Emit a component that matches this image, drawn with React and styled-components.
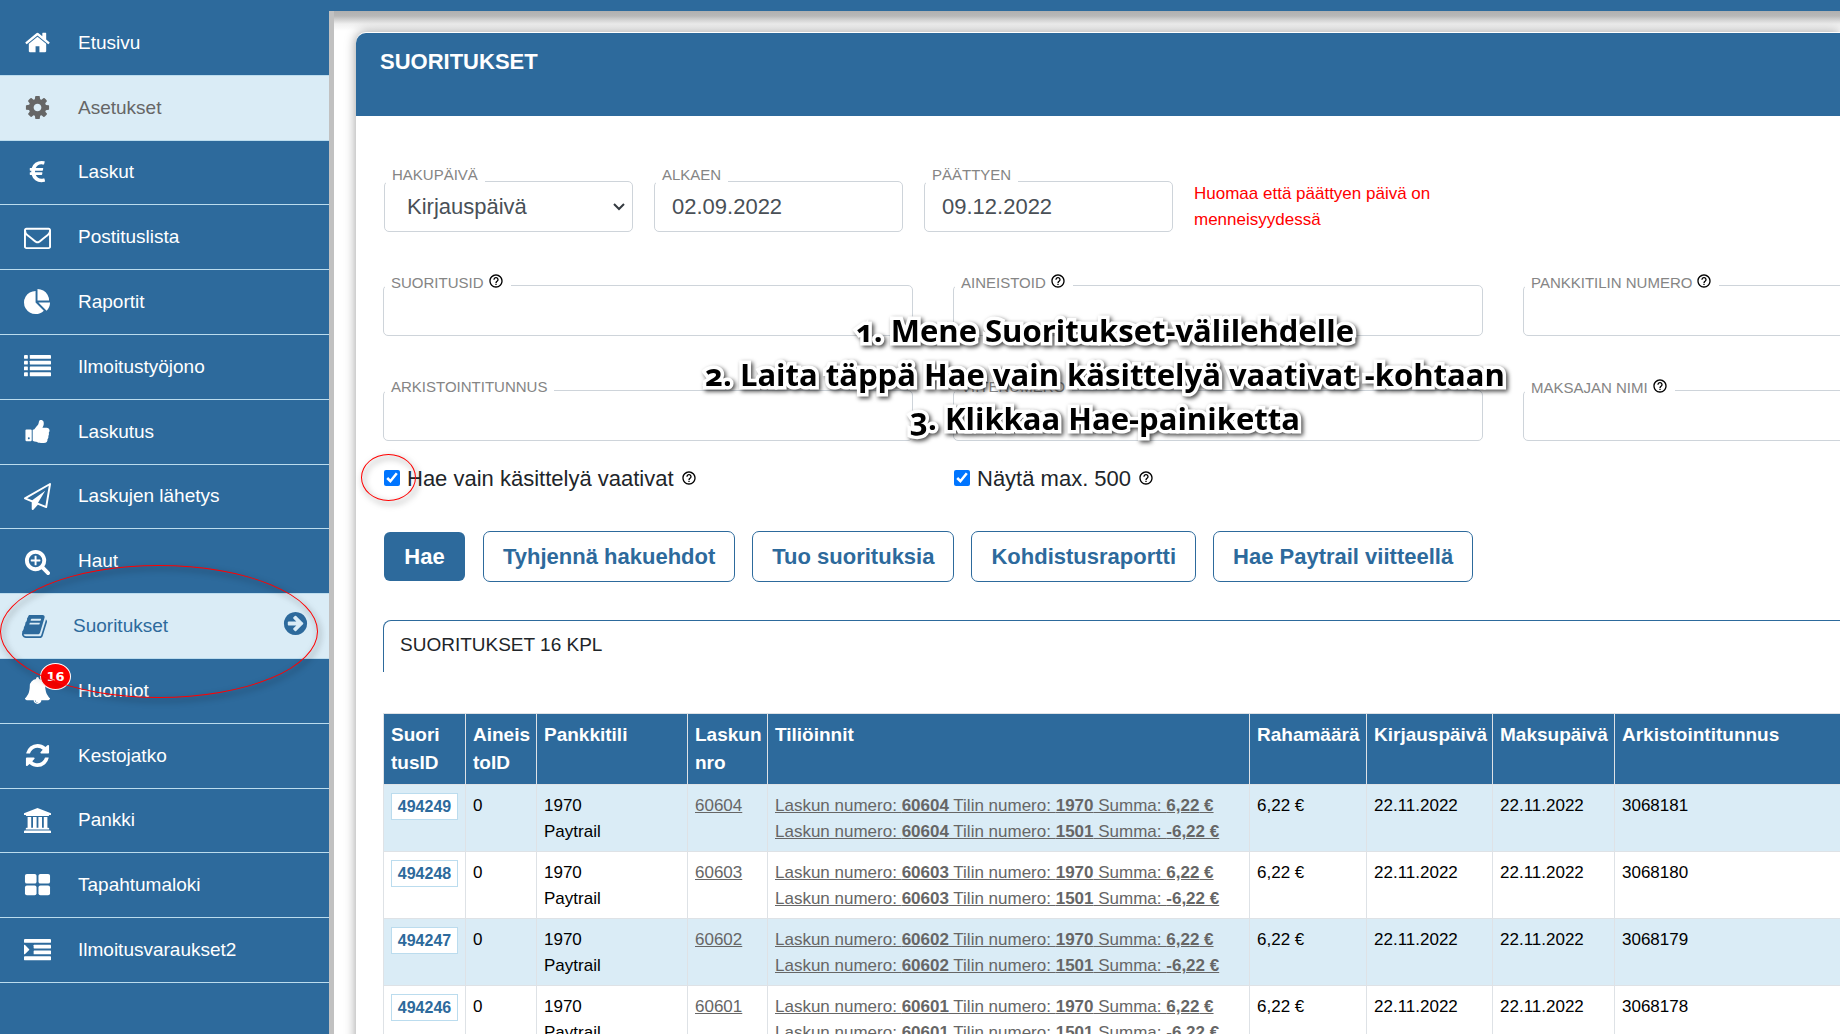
import React, {useState} from 'react';
import styled, {createGlobalStyle} from 'styled-components';
import {MdHelpOutline} from 'react-icons/md';

const BLUE = '#2d6a9c';
const PALE = '#daecf6';
const LINE = '#bbdcee';

const GlobalStyle = createGlobalStyle`
    * { box-sizing: border-box; }
    body {
        margin: 0;
        overflow: hidden;
        font-family: "Liberation Sans", Arial, sans-serif;
        font-size: 17px;
        color: #212529;
        background: #ffffff;
    }
    button, input, select { font-family: inherit; }
`;

const Page = styled.div`
    display: flex;
    flex-direction: column;
    height: 100vh;
    overflow: hidden;
    position: relative;
`;
const TopBar = styled.header`
    flex: none;
    height: 11px;
    background: ${BLUE};
`;
const Shell = styled.div`
    display: flex;
    flex: 1;
    min-height: 0;
`;
const Sidebar = styled.nav`
    flex: none;
    width: 334px;
    background: ${BLUE};
    border-right: 5px solid #c1c1c1;
    overflow: hidden;
`;
const Menu = styled.ul`
    display: grid;
    grid-auto-rows: 1fr;
    height: 972px;
    margin: 0;
    padding: 0;
    list-style: none;
`;
const MenuItem = styled.li`
    display: grid;
    border-bottom: 1px solid ${LINE};
    background: ${({$pale}) => $pale ? PALE : BLUE};
`;
const MenuLink = styled.a`
    display: flex;
    align-items: center;
    gap: ${({$active}) => $active ? 25 : 27}px;
    padding: 0 20px 0 ${({$active}) => $active ? 21 : 24}px;
    font-size: 19px;
    line-height: 24px;
    text-decoration: none;
    color: ${({$active, $pale}) => $active ? BLUE : $pale ? '#666666' : '#ffffff'};
    svg { fill: currentColor; }
`;
const IconBox = styled.span`
    display: flex;
    justify-content: center;
    position: relative;
    width: 27px;
    flex: none;
`;
const Arrow = styled.span`
    display: flex;
    margin-left: auto;
    padding-bottom: 6px;
`;
const Badge = styled.span`
    position: absolute;
    left: 16px;
    top: -14px;
    width: 31px;
    height: 27px;
    border: 1px solid #ffffff;
    border-radius: 50%;
    background: #ff0000;
    color: #ffffff;
    font: bold 13px/25px "DejaVu Sans", sans-serif;
    text-align: center;
`;

const Main = styled.main`
    flex: 1;
    min-width: 0;
    padding: 21px 0 0 22px;
    overflow: hidden;
    background: linear-gradient(#b0b0b0, #b8b8b8 5px, #f0f0f0 13px, #ffffff 20px) no-repeat;
`;
const Card = styled.section`
    min-height: 100%;
    padding-top: 1px;
    border-radius: 10px 0 0 0;
    background: #ffffff;
    box-shadow: 0 0 12px rgba(0, 0, 0, 0.4);
`;
const CardHeader = styled.div`
    height: 83px;
    padding: 15px 24px;
    border-radius: 10px 0 0 0;
    background: ${BLUE};
`;
const Title = styled.h1`
    margin: 0;
    font-size: 22px;
    line-height: 28px;
    color: #ffffff;
`;
const CardBody = styled.div`
    padding: 65px 0 0 27px;
`;
const DateRow = styled.div`
    display: flex;
    gap: 21px;
    margin-bottom: 52px;
    padding-left: 1px;
`;
const FieldGrid = styled.div`
    display: grid;
    grid-template-columns: repeat(3, 530px);
    gap: 54px 40px;
`;
const FieldBox = styled.div`
    position: relative;
    width: ${({$small}) => $small ? '249px' : 'auto'};
`;
const FieldLabel = styled.label`
    position: absolute;
    top: ${({$small}) => $small ? -15 : -12}px;
    left: 2px;
    display: flex;
    align-items: center;
    gap: 4px;
    padding: 0 7px 0 6px;
    background: #ffffff;
    color: #858585;
    font-size: 15px;
    line-height: 18px;
    white-space: nowrap;
    svg { color: #000000; margin-bottom: 3px; }
`;
const Input = styled.input`
    display: block;
    width: 100%;
    height: 51px;
    padding: 0 17px;
    border: 1px solid #ced4da;
    border-radius: 5px;
    background: #ffffff;
    color: #495057;
    font-size: 22px;
`;
const SelectWrap = styled.div`
    position: relative;
    svg {
        position: absolute;
        right: 8px;
        top: 22px;
        pointer-events: none;
    }
`;
const Select = styled.select`
    display: block;
    width: 100%;
    height: 51px;
    padding: 0 22px;
    border: 1px solid #ced4da;
    border-radius: 5px;
    background: #ffffff;
    color: #495057;
    font-size: 22px;
    appearance: none;
`;
const Note = styled.p`
    width: 260px;
    margin: 0;
    font-size: 17px;
    line-height: 26px;
    color: #ff0000;
`;
const CheckRow = styled.div`
    display: grid;
    grid-template-columns: repeat(3, 530px);
    gap: 40px;
    margin: 23px 0 37px;
`;
const Check = styled.label`
    display: flex;
    align-items: center;
    gap: 7px;
    font-size: 22px;
    line-height: 30px;
    input {
        width: 16px;
        height: 16px;
        margin: 0 0 3px 1px;
    }
    svg { color: #000000; margin-bottom: 3px; }
`;
const Buttons = styled.div`
    display: flex;
    gap: 17px;
    margin-bottom: 38px;
`;
const Button = styled.button`
    height: 51px;
    min-width: 83px;
    padding: 0 19px;
    border: 1px solid ${({$primary}) => $primary ? 'transparent' : BLUE};
    border-radius: 7px;
    background: ${({$primary}) => $primary ? BLUE : '#ffffff'};
    background-clip: padding-box;
    color: ${({$primary}) => $primary ? '#ffffff' : BLUE};
    font-size: 22px;
    font-weight: bold;
    cursor: pointer;
`;
const ResultTitle = styled.h2`
    height: 52px;
    width: 1670px;
    margin: 0 0 41px;
    padding: 11px 16px;
    border: 1px solid ${BLUE};
    border-bottom: none;
    border-radius: 8px 8px 0 0;
    font-size: 19px;
    font-weight: normal;
    line-height: 26px;
`;

const Table = styled.table`
    width: 1670px;
    table-layout: fixed;
    border-collapse: collapse;
    color: #000000;
`;
const Th = styled.th`
    padding: 7px;
    border: 1px solid #dee2e6;
    background: ${BLUE};
    color: #ffffff;
    font-size: 19px;
    line-height: 28px;
    text-align: left;
    vertical-align: top;
    white-space: pre-line;
`;
const Tr = styled.tr`
    background: #ffffff;
    &:nth-child(odd) { background: ${PALE}; }
`;
const Td = styled.td`
    padding: 8px 7px 6px;
    border: 1px solid #dee2e6;
    line-height: 26px;
    vertical-align: top;
    white-space: nowrap;
`;
const CellLink = styled.a`
    display: block;
    color: #666666;
    text-decoration: underline;
`;
const IdButton = styled.button`
    display: block;
    width: 67px;
    height: 27px;
    padding: 0;
    border: 1px solid ${LINE};
    background: #ffffff;
    color: ${BLUE};
    font-size: 16px;
    font-weight: bold;
`;

const Callout = styled.div`
    position: absolute;
    top: 308px;
    left: 334px;
    right: 0;
    padding-left: 36px;
    text-align: center;
    color: #000000;
    font: bold 31px/44px "Open Sans", "Noto Sans", sans-serif;
    font-variant-numeric: oldstyle-nums;
    -webkit-text-stroke: 7px #ffffff;
    paint-order: stroke fill;
    filter: drop-shadow(2px 2px 2px rgba(0, 0, 0, 0.7));
    pointer-events: none;
    p { margin: 0; }
`;
const Ring = styled.div`
    position: absolute;
    left: ${({$x}) => $x}px;
    top: ${({$y}) => $y}px;
    width: ${({$w}) => $w}px;
    height: ${({$h}) => $h}px;
    border: 1px solid #ff0000;
    border-radius: 50%;
    filter: drop-shadow(2px 3px 3px rgba(0, 0, 0, 0.7));
    pointer-events: none;
`;

const shapes = {
    home: <path d="M1472 992v480q0 26-19 45t-45 19h-384v-384h-256v384h-384q-26 0-45-19t-19-45v-480q0-1 .5-3t.5-3l575-474 575 474q1 2 1 6zm223-69l-62 74q-8 9-21 11h-3q-13 0-21-7l-692-577-692 577q-12 8-24 7-13-2-21-11l-62-74q-8-10-7-23.5t11-21.5l719-599q32-26 76-26t76 26l244 204v-195q0-14 9-23t23-9h192q14 0 23 9t9 23v408l219 182q10 8 11 21.5t-7 23.5z"/>,
    cog: <path d="M1152 896q0-106-75-181t-181-75-181 75-75 181 75 181 181 75 181-75 75-181zm512-109v222q0 12-8 23t-20 13l-185 28q-19 54-39 91 35 50 107 138 10 12 10 25t-9 23q-27 37-99 108t-94 71q-12 0-26-9l-138-108q-44 23-91 38-16 136-29 186-7 28-36 28h-222q-14 0-24.5-8.5t-11.5-21.5l-28-184q-49-16-90-37l-141 107q-10 9-25 9-14 0-25-11-126-114-165-168-7-10-7-23 0-12 8-23 15-21 51-66.5t54-70.5q-27-50-41-99l-183-27q-13-2-21-12.5t-8-23.5v-222q0-12 8-23t19-13l186-28q14-46 39-92-40-57-107-138-10-12-10-24 0-10 9-23 26-36 98.5-107.5t94.5-71.5q13 0 26 10l138 107q44-23 91-38 16-136 29-186 7-28 36-28h222q14 0 24.5 8.5t11.5 21.5l28 184q49 16 90 37l142-107q9-9 24-9 13 0 25 10 129 119 165 170 7 8 7 22 0 12-8 23-15 21-51 66.5t-54 70.5q26 50 41 98l183 28q13 2 21 12.5t8 23.5z"/>,
    euro: <path d="M1360 1307l35 159q3 12-3 22.5t-17 14.5l-5 1q-4 2-10.5 3.5t-16 4.5-21.5 5.5-25.5 5-30 5-33.5 4.5-36.5 3-38.5 1q-234 0-409-130.5t-238-351.5h-95q-13 0-22.5-9.5t-9.5-22.5v-113q0-13 9.5-22.5t22.5-9.5h66q-2-57 1-105h-67q-14 0-23-9t-9-23v-114q0-14 9-23t23-9h98q67-210 243.5-338t400.5-128q102 0 194 23 11 3 20 15 6 11 3 24l-43 159q-3 13-14 19.5t-24 2.5l-4-1q-4-1-11.5-2.5l-17.5-3.5-22.5-3.5-26-3-29-2.5-29.5-1q-126 0-226 64t-150 176h468q16 0 25 12 10 12 7 26l-24 114q-5 26-32 26h-488q-3 37 0 105h459q15 0 25 12 9 12 6 27l-24 112q-2 11-11 18.5t-20 7.5h-387q48 117 149.5 185.5t228.5 68.5q18 0 36-1.5t33.5-3.5 29.5-4.5 24.5-5 18.5-4.5l12-3 5-2q13-5 26 2 12 7 15 21z"/>,
    envelope: <path d="M1664 1504v-768q-32 36-69 66-268 206-426 338-51 43-83 67t-86.5 48.5-102.5 24.5h-2q-48 0-102.5-24.5t-86.5-48.5-83-67q-158-132-426-338-37-30-69-66v768q0 13 9.5 22.5t22.5 9.5h1472q13 0 22.5-9.5t9.5-22.5zm0-1051v-24.5l-.5-13-3-12.5-5.5-9-9-7.5-14-2.5h-1472q-13 0-22.5 9.5t-9.5 22.5q0 168 147 284 193 152 401 317 6 5 35 29.5t46 37.5 44.5 31.5 50.5 27.5 43 9h2q20 0 43-9t50.5-27.5 44.5-31.5 46-37.5 35-29.5q208-165 401-317 54-43 100.5-115.5t46.5-131.5zm128-37v1088q0 66-47 113t-113 47h-1472q-66 0-113-47t-47-113v-1088q0-66 47-113t113-47h1472q66 0 113 47t47 113z"/>,
    pie: <path d="M768 890l546 546q-106 108-247.5 168t-298.5 60q-209 0-385.5-103t-279.5-279.5-103-385.5 103-385.5 279.5-279.5 385.5-103v762zm187 6h773q0 157-60 298.5t-168 247.5zm709-128h-768v-768q209 0 385.5 103t279.5 279.5 103 385.5z"/>,
    list: [128, 512, 896, 1280].map(y => (
        <g key={y}>
            <rect x="0" y={y} width="256" height="256" rx="32"/>
            <rect x="384" y={y} width="1408" height="256" rx="32"/>
        </g>
    )),
    thumb: <path d="M384 1344q0-26-19-45t-45-19-45 19-19 45 19 45 45 19 45-19 19-45zm128-512v640q0 26-19 45t-45 19h-288q-26 0-45-19t-19-45v-640q0-26 19-45t45-19h288q26 0 45 19t19 45zm1184 0q0 86-55 149 15 44 15 76 3 76-43 137 17 56 0 117-15 57-54 94 9 112-49 181-64 76-197 78h-129q-66 0-144-15.5t-121.5-29-120.5-39.5q-123-43-158-44-26-1-45-19.5t-19-44.5v-641q0-25 18-43.5t43-20.5q24-2 76-59t101-121q68-87 101-120 18-18 31-48t17.5-48.5 13.5-60.5q7-39 12.5-61t19.5-52 34-50q19-19 45-19 46 0 82.5 10.5t60 26 40 40.5 24 45 12 50 5 45 .5 39q0 38-9.5 76t-19 60-27.5 56q-3 6-10 18t-11 22-8 24h277q78 0 135 57t57 135z"/>,
    plane: <path d="M1764 11q33 24 27 64l-256 1536q-5 29-32 45-14 8-31 8-11 0-24-5l-527-215-298 327q-18 21-47 21-14 0-23-4-19-7-30-23.5t-11-36.5v-452l-472-193q-37-14-40-55-3-39 32-59l1664-960q35-21 68 2zm-342 1499l221-1323-1434 827 336 137 863-639-478 797z"/>,
    search: <path d="M1088 800v64q0 13-9.5 22.5t-22.5 9.5h-224v224q0 13-9.5 22.5t-22.5 9.5h-64q-13 0-22.5-9.5t-9.5-22.5v-224h-224q-13 0-22.5-9.5t-9.5-22.5v-64q0-13 9.5-22.5t22.5-9.5h224v-224q0-13 9.5-22.5t22.5-9.5h64q13 0 22.5 9.5t9.5 22.5v224h224q13 0 22.5 9.5t9.5 22.5zm128 32q0-185-131.5-316.5t-316.5-131.5-316.5 131.5-131.5 316.5 131.5 316.5 316.5 131.5 316.5-131.5 131.5-316.5zm512 832q0 53-37.5 90.5t-90.5 37.5q-54 0-90-38l-343-342q-179 124-399 124-143 0-273.5-55.5t-225-150-150-225-55.5-273.5 55.5-273.5 150-225 225-150 273.5-55.5 273.5 55.5 225 150 150 225 55.5 273.5q0 220-124 399l343 343q37 37 37 90z"/>,
    book: <path d="M1703 478q40 57 18 129l-275 906q-19 64-76.5 107.5t-122.5 43.5h-923q-77 0-148.5-53.5t-99.5-131.5q-24-67-2-127 0-4 3-27t4-37q1-8-3-21.5t-3-19.5q2-11 8-21t16.5-23.5 16.5-23.5q23-38 45-91.5t30-91.5q3-10 .5-30t-.5-28q3-11 17-28t17-23q21-36 42-92t25-90q1-9-2.5-32t.5-28q4-13 22-30.5t22-22.5q19-26 42.5-84.5t27.5-96.5q1-8-3-25.5t-2-26.5q2-8 9-18t18-23 17-21q8-12 16.5-30.5t15-35 16-36 19.5-32 26.5-23.5 36-11.5 47.5 5.5l-1 3q38-9 51-9h761q74 0 114 56t18 130l-274 906q-36 119-71.5 153.5t-128.5 34.5h-869q-27 0-38 15-11 16-1 43 24 70 144 70h923q29 0 56-15.5t35-41.5l300-987q7-22 5-57 38 15 59 43zm-1064 2q-4 13 2 22.5t20 9.5h608q13 0 25.5-9.5t16.5-22.5l21-64q4-13-2-22.5t-20-9.5h-608q-13 0-25.5 9.5t-16.5 22.5zm-83 256q-4 13 2 22.5t20 9.5h608q13 0 25.5-9.5t16.5-22.5l21-64q4-13-2-22.5t-20-9.5h-608q-13 0-25.5 9.5t-16.5 22.5z"/>,
    bell: <path d="M912 1696q0-16-16-16-59 0-101.5-42.5t-42.5-101.5q0-16-16-16t-16 16q0 73 51.5 124.5t124.5 51.5q16 0 16-16zm816-288q0 52-38 90t-90 38h-448q0 106-75 181t-181 75-181-75-75-181h-448q-52 0-90-38t-38-90q50-42 91-88t85-119.5 74.5-158.5 50-206 19.5-260q0-152 117-282.5t307-158.5q-8-19-8-39 0-40 28-68t68-28 68 28 28 68q0 20-8 39 190 28 307 158.5t117 282.5q0 139 19.5 260t50 206 74.5 158.5 85 119.5 91 88z"/>,
    refresh: <path d="M1639 1056q0 5-1 7-64 268-268 434.5t-478 166.5q-146 0-282.5-55t-243.5-157l-129 129q-19 19-45 19t-45-19-19-45v-448q0-26 19-45t45-19h448q26 0 45 19t19 45-19 45l-137 137q71 66 161 102t187 36q134 0 250-65t186-179q11-17 53-117 8-23 30-23h192q13 0 22.5 9.5t9.5 22.5zm25-800v448q0 26-19 45t-45 19h-448q-26 0-45-19t-19-45 19-45l138-138q-148-137-349-137-134 0-250 65t-186 179q-11 17-53 117-8 23-30 23h-199q-13 0-22.5-9.5t-9.5-22.5v-7q65-268 270-434.5t480-166.5q146 0 284 55.5t245 156.5l130-129q19-19 45-19t45 19 19 45z"/>,
    bank: <path d="M960 0l960 384v128h-128q0 26-20.5 45t-48.5 19h-1526q-28 0-48.5-19t-20.5-45h-128v-128zm-704 640h256v768h128v-768h256v768h128v-768h256v768h128v-768h256v768h59q28 0 48.5 19t20.5 45v64h-1664v-64q0-26 20.5-45t48.5-19h59v-768zm1595 960q28 0 48.5 19t20.5 45v128h-1920v-128q0-26 20.5-45t48.5-19h1782z"/>,
    grid: (
        <g>
            <rect x="64" y="128" width="768" height="640" rx="128"/>
            <rect x="960" y="128" width="768" height="640" rx="128"/>
            <rect x="64" y="896" width="768" height="640" rx="128"/>
            <rect x="960" y="896" width="768" height="640" rx="128"/>
        </g>
    ),
    indent: (
        <g>
            <path d="M352 832q0 14-9 23l-288 288q-9 9-23 9-32-2-32-32v-576q0-30 32-32 14 0 23 9l288 288q9 9 9 23z"/>
            <rect x="0" y="128" width="1792" height="256" rx="32"/>
            <rect x="640" y="512" width="1152" height="256" rx="32"/>
            <rect x="640" y="896" width="1152" height="256" rx="32"/>
            <rect x="0" y="1280" width="1792" height="256" rx="32"/>
        </g>
    ),
    arrow: <path d="M1413 896q0-27-18-45l-91-91-362-362q-18-18-45-18t-45 18l-91 91q-18 18-18 45t18 45l189 189h-502q-26 0-45 19t-19 45v128q0 26 19 45t45 19h502l-189 189q-19 19-19 45t19 45l91 91q18 18 45 18t45-18l362-362 91-91q18-18 18-45zm251 0q0 209-103 385.5t-279.5 279.5-385.5 103-385.5-103-279.5-279.5-103-385.5 103-385.5 279.5-279.5 385.5-103 385.5 103 279.5 279.5 103 385.5z"/>,
};

const Icon = ({name}) => {
    const wide = name === 'bank';
    return (
        <svg width={wide ? 29 : 27} height="27" viewBox={`0 0 ${wide ? 1920 : 1792} 1792`} aria-hidden="true">
            {shapes[name]}
        </svg>
    )
}

const menu = [
    {icon: 'home', text: 'Etusivu'},
    {icon: 'cog', text: 'Asetukset', pale: true},
    {icon: 'euro', text: 'Laskut'},
    {icon: 'envelope', text: 'Postituslista'},
    {icon: 'pie', text: 'Raportit'},
    {icon: 'list', text: 'Ilmoitustyöjono'},
    {icon: 'thumb', text: 'Laskutus'},
    {icon: 'plane', text: 'Laskujen lähetys'},
    {icon: 'search', text: 'Haut'},
    {icon: 'book', text: 'Suoritukset', pale: true, active: true},
    {icon: 'bell', text: 'Huomiot', badge: 16},
    {icon: 'refresh', text: 'Kestojatko'},
    {icon: 'bank', text: 'Pankki'},
    {icon: 'grid', text: 'Tapahtumaloki'},
    {icon: 'indent', text: 'Ilmoitusvaraukset2'},
];

const fields = [
    {id: 'suoritusid', label: 'SUORITUSID', help: true},
    {id: 'aineistoid', label: 'AINEISTOID', help: true},
    {id: 'pankkitili', label: 'PANKKITILIN NUMERO', help: true},
    {id: 'arkistointitunnus', label: 'ARKISTOINTITUNNUS'},
    {id: 'viitenumero', label: 'VIITENUMERO'},
    {id: 'maksaja', label: 'MAKSAJAN NIMI', help: true},
];

const columns = [
    {title: 'Suori\ntusID', width: 82},
    {title: 'Aineis\ntoID', width: 71},
    {title: 'Pankkitili', width: 151},
    {title: 'Laskun\nnro', width: 80},
    {title: 'Tiliöinnit', width: 482},
    {title: 'Rahamäärä', width: 117},
    {title: 'Kirjauspäivä', width: 126},
    {title: 'Maksupäivä', width: 122},
    {title: 'Arkistointitunnus', width: 439},
];

const rows = [
    {id: 494249, invoice: 60604, archive: 3068181},
    {id: 494248, invoice: 60603, archive: 3068180},
    {id: 494247, invoice: 60602, archive: 3068179},
    {id: 494246, invoice: 60601, archive: 3068178},
];

const Field = ({id, label, help, small, children}) => (
    <FieldBox $small={small}>
        {children || <Input id={id} type="text"/>}
        <FieldLabel htmlFor={id} $small={small}>
            {label}
            {help && <MdHelpOutline size={16}/>}
        </FieldLabel>
    </FieldBox>
)

const Posting = ({invoice, account, sum}) => (
    <CellLink href="#">
        Laskun numero: <b>{invoice}</b> Tilin numero: <b>{account}</b> Summa: <b>{sum} €</b>
    </CellLink>
)

const App = () => {
    const [onlyOpen, setOnlyOpen] = useState(true);
    const [limit, setLimit] = useState(true);

    return (
        <Page>
            <GlobalStyle/>
            <TopBar/>
            <Shell>
                <Sidebar>
                    <Menu>
                        {menu.map(({icon, text, pale, active, badge}) => (
                            <MenuItem key={text} $pale={pale}>
                                <MenuLink href="#" $pale={pale} $active={active}>
                                    <IconBox>
                                        <Icon name={icon}/>
                                        {badge && <Badge>{badge}</Badge>}
                                    </IconBox>
                                    {text}
                                    {active && <Arrow><Icon name="arrow"/></Arrow>}
                                </MenuLink>
                            </MenuItem>
                        ))}
                    </Menu>
                </Sidebar>
                <Main>
                    <Card>
                        <CardHeader>
                            <Title>SUORITUKSET</Title>
                        </CardHeader>
                        <CardBody>
                            <DateRow>
                                <Field id="hakupaiva" label="HAKUPÄIVÄ" small>
                                    <SelectWrap>
                                        <Select id="hakupaiva">
                                            <option>Kirjauspäivä</option>
                                        </Select>
                                        <svg width="12" height="8" viewBox="0 0 12 8" fill="none" stroke="#343a40" strokeWidth="2">
                                            <path d="M1 1l5 5 5-5"/>
                                        </svg>
                                    </SelectWrap>
                                </Field>
                                <Field id="alkaen" label="ALKAEN" small>
                                    <Input id="alkaen" type="text" defaultValue="02.09.2022"/>
                                </Field>
                                <Field id="paattyen" label="PÄÄTTYEN" small>
                                    <Input id="paattyen" type="text" defaultValue="09.12.2022"/>
                                </Field>
                                <Note>Huomaa että päättyen päivä on menneisyydessä</Note>
                            </DateRow>
                            <FieldGrid>
                                {fields.map(field => <Field key={field.id} {...field}/>)}
                            </FieldGrid>
                            <CheckRow>
                                <Check>
                                    <input type="checkbox" checked={onlyOpen} onChange={() => setOnlyOpen(!onlyOpen)}/>
                                    Hae vain käsittelyä vaativat
                                    <MdHelpOutline size={16}/>
                                </Check>
                                <Check>
                                    <input type="checkbox" checked={limit} onChange={() => setLimit(!limit)}/>
                                    Näytä max. 500
                                    <MdHelpOutline size={16}/>
                                </Check>
                            </CheckRow>
                            <Buttons>
                                <Button $primary>Hae</Button>
                                <Button>Tyhjennä hakuehdot</Button>
                                <Button>Tuo suorituksia</Button>
                                <Button>Kohdistusraportti</Button>
                                <Button>Hae Paytrail viitteellä</Button>
                            </Buttons>
                            <ResultTitle>SUORITUKSET 16 KPL</ResultTitle>
                            <Table>
                                <colgroup>
                                    {columns.map(({title, width}) => <col key={title} width={width}/>)}
                                </colgroup>
                                <thead>
                                    <tr>
                                        {columns.map(({title}) => <Th key={title}>{title}</Th>)}
                                    </tr>
                                </thead>
                                <tbody>
                                    {rows.map(({id, invoice, archive}) => (
                                        <Tr key={id}>
                                            <Td><IdButton>{id}</IdButton></Td>
                                            <Td>0</Td>
                                            <Td>1970<br/>Paytrail</Td>
                                            <Td><CellLink href="#">{invoice}</CellLink></Td>
                                            <Td>
                                                <Posting invoice={invoice} account="1970" sum="6,22"/>
                                                <Posting invoice={invoice} account="1501" sum="-6,22"/>
                                            </Td>
                                            <Td>6,22 €</Td>
                                            <Td>22.11.2022</Td>
                                            <Td>22.11.2022</Td>
                                            <Td>{archive}</Td>
                                        </Tr>
                                    ))}
                                </tbody>
                            </Table>
                        </CardBody>
                    </Card>
                </Main>
            </Shell>
            <Ring $x={0} $y={565} $w={318} $h={133}/>
            <Ring $x={361} $y={454} $w={55} $h={47}/>
            <Callout>
                <p>1. Mene Suoritukset-välilehdelle</p>
                <p>2. Laita täppä Hae vain käsittelyä vaativat -kohtaan</p>
                <p>3. Klikkaa Hae-painiketta</p>
            </Callout>
        </Page>
    )
}

export default App;
